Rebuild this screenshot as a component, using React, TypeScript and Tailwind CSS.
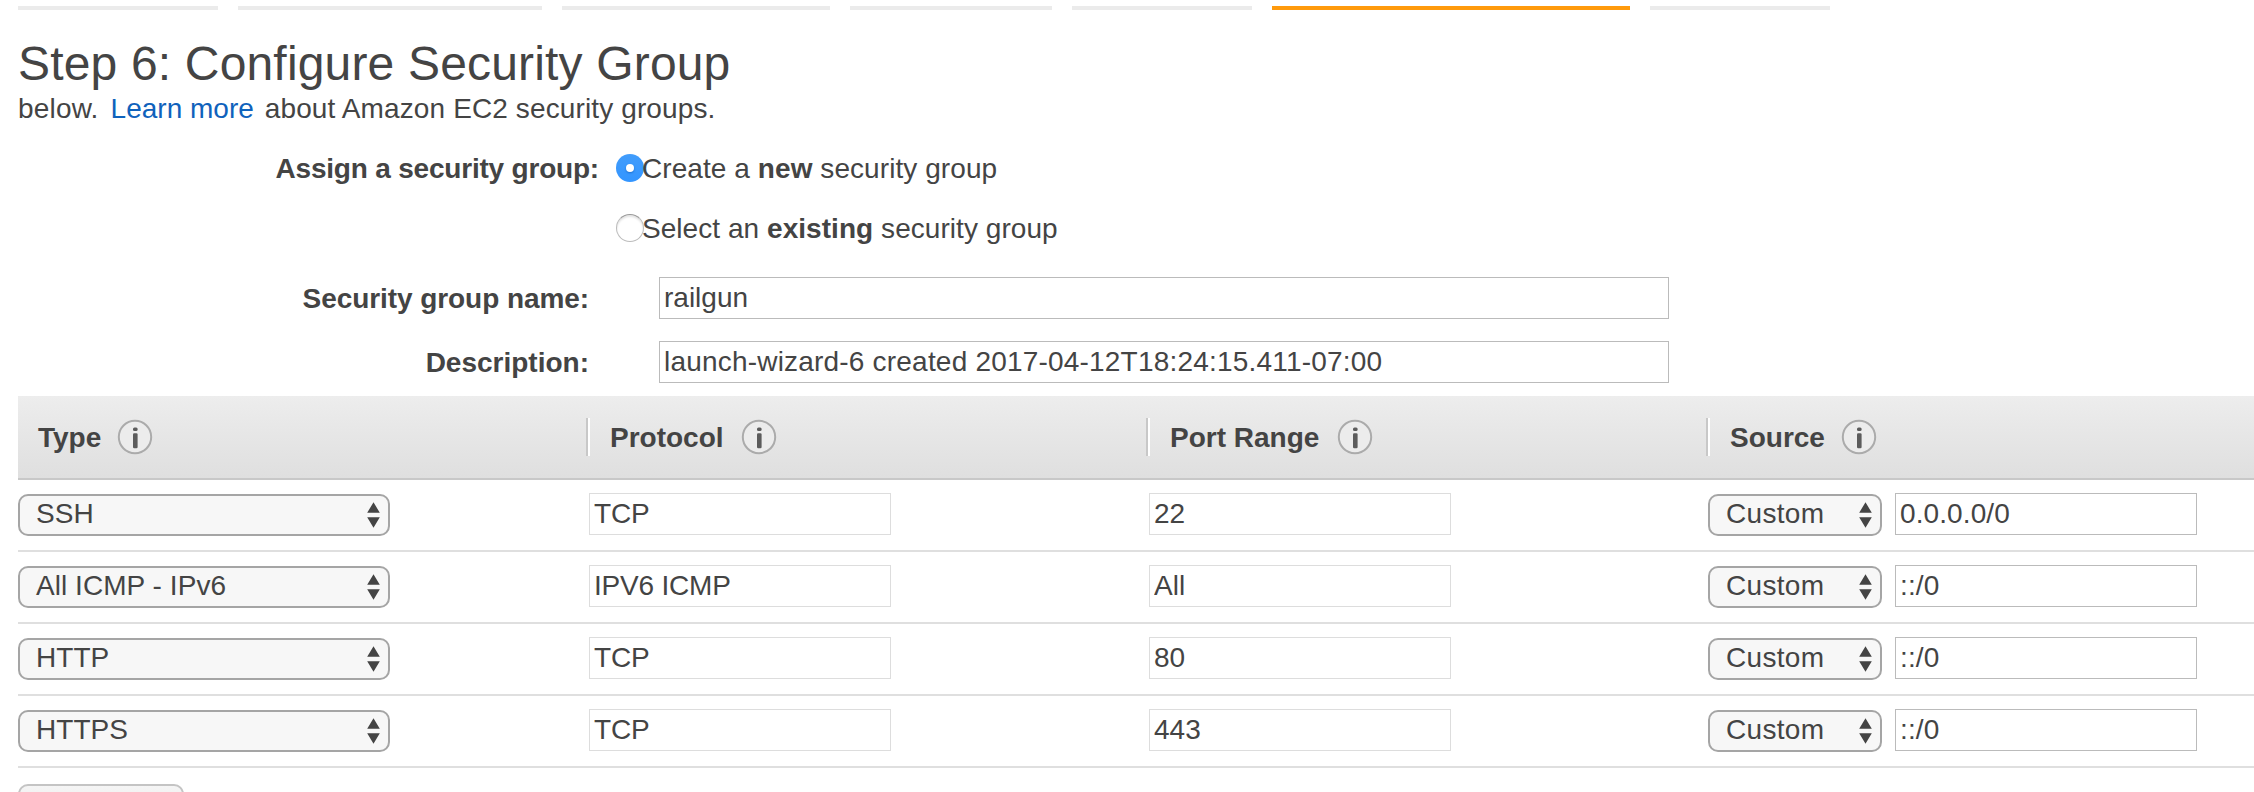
import React from "react";

const STEPS = [
  { width: "w-[200px]", active: false },
  { width: "w-[304px]", active: false },
  { width: "w-[268px]", active: false },
  { width: "w-[202px]", active: false },
  { width: "w-[180px]", active: false },
  { width: "w-[358px]", active: true },
  { width: "w-[180px]", active: false },
];

const RULES = [
  { type: "SSH", protocol: "TCP", port: "22", source: "0.0.0.0/0" },
  { type: "All ICMP - IPv6", protocol: "IPV6 ICMP", port: "All", source: "::/0" },
  { type: "HTTP", protocol: "TCP", port: "80", source: "::/0" },
  { type: "HTTPS", protocol: "TCP", port: "443", source: "::/0" },
];

const GRID = "grid grid-cols-[568px_560px_560px_548px]";

function InfoIcon() {
  return (
    <svg className="size-9 shrink-0" viewBox="0 0 36 36" fill="none">
      <circle cx="18" cy="18" r="16.2" fill="#ececec" stroke="#ababab" strokeWidth="2" />
      <rect x="16" y="8.5" width="4.6" height="3.6" rx="1.5" fill="#5c5c5c" />
      <rect x="16" y="14.2" width="4.6" height="15" rx="1.2" fill="#5c5c5c" />
    </svg>
  );
}

function HeaderCell({ label, divider, gap }: { label: string; divider?: boolean; gap: string }) {
  return (
    <div className="flex h-[82px] items-center">
      {divider && <span className="h-[38px] w-1 shrink-0 border-l-2 border-[#c8c8c8] bg-white" />}
      <span className={`flex items-center pt-[1px] font-bold leading-[42px] ${divider ? "pl-5" : "pl-5"}`}>{label}</span>
      <span className={`flex ${gap}`}>
        <InfoIcon />
      </span>
    </div>
  );
}

function Select({ value, className }: { value: string; className: string }) {
  return (
    <button
      type="button"
      className={`flex h-[42px] shrink-0 items-center justify-between rounded-[10px] border-2 border-[#a5a5a5] bg-[#f7f7f7] pr-2 ${className}`}
    >
      <span className="-mt-[2px] whitespace-pre leading-[36px]">{value}</span>
      <svg className="h-[26px] w-[13px]" viewBox="0 0 13 26" fill="#444">
        <path d="M6.5 0.3 12.8 10.7H0.2ZM0.2 15.3H12.8L6.5 25.7Z" />
      </svg>
    </button>
  );
}

function Field({ value, className }: { value: string; className: string }) {
  return (
    <input
      readOnly
      value={value}
      className={`block h-[42px] shrink-0 border bg-white pl-1 leading-[40px] outline-none ${className}`}
    />
  );
}

function Radio({ checked }: { checked?: boolean }) {
  return checked ? (
    <span className="flex size-7 shrink-0 items-center justify-center rounded-full bg-gradient-to-b from-[#419cfb] to-[#3395ff]">
      <span className="size-2 rounded-full bg-white shadow-[0_1px_2px_#1c6fd0]" />
    </span>
  ) : (
    <span className="size-7 shrink-0 rounded-full border border-[#bcbcbc] border-t-[#999] bg-white shadow-[inset_0_2px_2px_#e4e4e4]" />
  );
}

export default function App() {
  return (
    <main className="h-[792px] w-[2254px] overflow-hidden bg-white pl-[18px] pt-1.5 font-['Liberation_Sans',Arial,sans-serif] text-[28px] text-[#444]">
      <nav className="flex h-1 gap-5">
        {STEPS.map((s, i) => (
          <span key={i} className={`h-1 ${s.width} ${s.active ? "bg-[#ff9a0c]" : "bg-[#ebebeb]"}`} />
        ))}
      </nav>

      <h1 className="mt-[26px] h-[56px] whitespace-nowrap text-[48px] leading-[56px] tracking-[0.17px]">
        Step 6: Configure Security Group
      </h1>
      <p className="flex h-[34px] whitespace-pre leading-[34px]">
        <span className="tracking-[0.2px]">below.</span>
        <a className="ml-[12px] text-[#0f62bc]">Learn more</a>
        <span className="ml-[11px] tracking-[0.12px]">about Amazon EC2 security groups.</span>
      </p>

      <form className="pt-[22px]">
        <div className="flex">
          <b className="mr-[17px] block w-[581px] pt-[1px] text-right leading-[40px] tracking-[-0.2px]">Assign a security group:</b>
          <div className="flex h-[100px] flex-col gap-5">
            <label className="flex h-10 items-center whitespace-pre">
              <Radio checked />
              <span className="-ml-[2px] pt-[2px] leading-[40px] tracking-[0.07px]">Create a <b>new</b> security group</span>
            </label>
            <label className="flex h-10 items-center whitespace-pre">
              <Radio />
              <span className="-ml-[2px] pt-[2px] leading-[40px] tracking-[0.05px]">Select an <b>existing</b> security group</span>
            </label>
          </div>
        </div>
        <div className="mt-[29px] flex h-[42px]">
          <b className="mr-[70px] block w-[571px] pt-[1px] text-right leading-[42px] tracking-[-0.07px]">Security group name:</b>
          <Field value="railgun" className="w-[1010px] border-[#bbb]" />
        </div>
        <div className="mt-[22px] flex h-[42px]">
          <b className="mr-[70px] block w-[571px] pt-[1px] text-right leading-[42px]">Description:</b>
          <Field value="launch-wizard-6 created 2017-04-12T18:24:15.411-07:00" className="w-[1010px] border-[#bbb] tracking-[0.2px]" />
        </div>
      </form>

      <section className="mt-[13px]">
        <header className={`${GRID} h-[84px] border-b-2 border-[#c8c8c8] bg-gradient-to-b from-[#ededed] to-[#dfdfdf]`}>
          <HeaderCell label="Type" gap="ml-[16px]" />
          <HeaderCell label="Protocol" divider gap="ml-[17px]" />
          <HeaderCell label="Port Range" divider gap="ml-[18px]" />
          <HeaderCell label="Source" divider gap="ml-[16px]" />
        </header>
        {RULES.map((r) => (
          <div key={r.type} className={`${GRID} h-[72px] border-b-2 border-[#dfdfdf] pt-[13px]`}>
            <div className="pt-[1px]">
              <Select value={r.type} className="w-[372px] pl-[16px] tracking-[0.05px]" />
            </div>
            <div className="pl-[3px]">
              <Field value={r.protocol} className="w-[302px] border-[#ddd] tracking-[-0.2px]" />
            </div>
            <div className="pl-[3px]">
              <Field value={r.port} className="w-[302px] border-[#ddd]" />
            </div>
            <div className="flex gap-[13px] pl-[2px]">
              <div className="pt-[1px]">
                <Select value="Custom" className="w-[174px] pl-[16px] tracking-[0.3px]" />
              </div>
              <Field value={r.source} className="w-[302px] border-[#bbb] tracking-[0.1px]" />
            </div>
          </div>
        ))}
      </section>

      <button
        type="button"
        aria-label="Add Rule"
        className="mt-4 block h-[42px] w-[166px] rounded-[10px] border-2 border-[#c4c4c4] bg-gradient-to-b from-[#f5f5f5] to-[#e6e6e6]"
      />
    </main>
  );
}
